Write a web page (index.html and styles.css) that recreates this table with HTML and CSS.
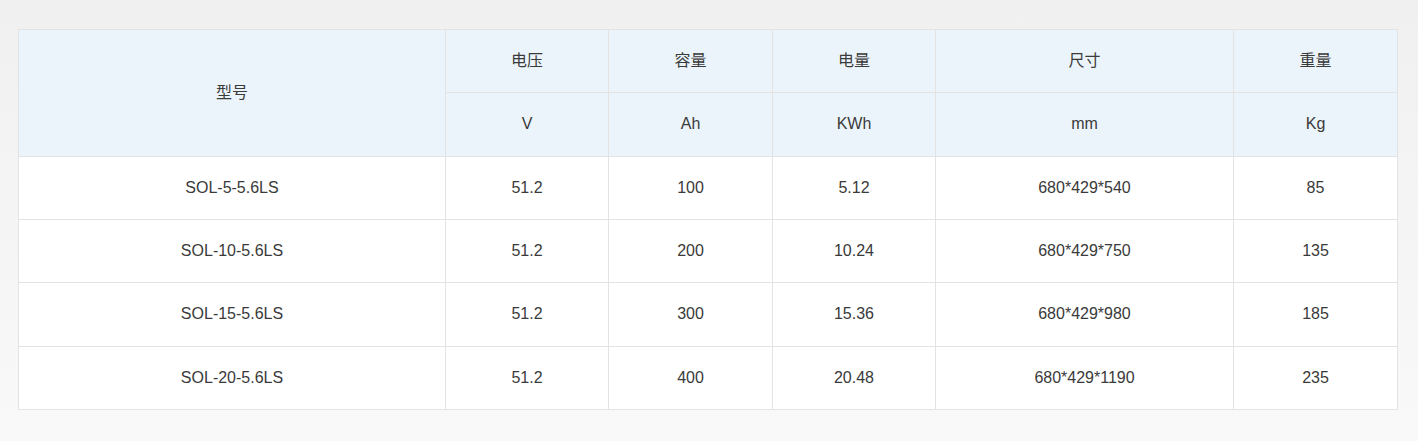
FILE: index.html
```html
<!DOCTYPE html>
<html lang="zh">
<head>
<meta charset="utf-8">
<title>型号参数</title>
<link rel="stylesheet" href="styles.css">
</head>
<body>
<div class="page">
<table class="spec">
<colgroup>
<col class="c-model"><col class="c-n"><col class="c-n2"><col class="c-n"><col class="c-size"><col class="c-n2">
</colgroup>
<thead>
<tr><th rowspan="2">型号</th><th>电压</th><th>容量</th><th>电量</th><th>尺寸</th><th>重量</th></tr>
<tr><th>V</th><th>Ah</th><th>KWh</th><th>mm</th><th>Kg</th></tr>
</thead>
<tbody>
<tr><td>SOL-5-5.6LS</td><td>51.2</td><td>100</td><td>5.12</td><td>680*429*540</td><td>85</td></tr>
<tr><td>SOL-10-5.6LS</td><td>51.2</td><td>200</td><td>10.24</td><td>680*429*750</td><td>135</td></tr>
<tr><td>SOL-15-5.6LS</td><td>51.2</td><td>300</td><td>15.36</td><td>680*429*980</td><td>185</td></tr>
<tr><td>SOL-20-5.6LS</td><td>51.2</td><td>400</td><td>20.48</td><td>680*429*1190</td><td>235</td></tr>
</tbody>
</table>
</div>
</body>
</html>
```
FILE: styles.css
```css
html, body {
  margin: 0;
  padding: 0;
}
body {
  background: linear-gradient(to bottom, #f0f0f0 0%, #f9f9f9 100%);
  min-height: 441px;
  font-family: "Liberation Sans", Arial, "Noto Sans CJK SC", sans-serif;
  font-size: 16px;
  color: #3a3a3a;
}
.page {
  padding: 29px 21px 0 18px;
}
.spec {
  border-collapse: collapse;
  table-layout: fixed;
  width: 1380px;
  background: #fff;
}
.c-model { width: 427px; }
.c-n { width: 163px; }
.c-n2 { width: 164px; }
.c-size { width: 298px; }
.spec th, .spec td {
  border: 1px solid #e3e3e3;
  text-align: center;
  vertical-align: middle;
  font-weight: normal;
  height: 62.33px;
  padding: 0;
  line-height: 20px;
}
.spec th {
  background: #ecf4fb;
}
```
